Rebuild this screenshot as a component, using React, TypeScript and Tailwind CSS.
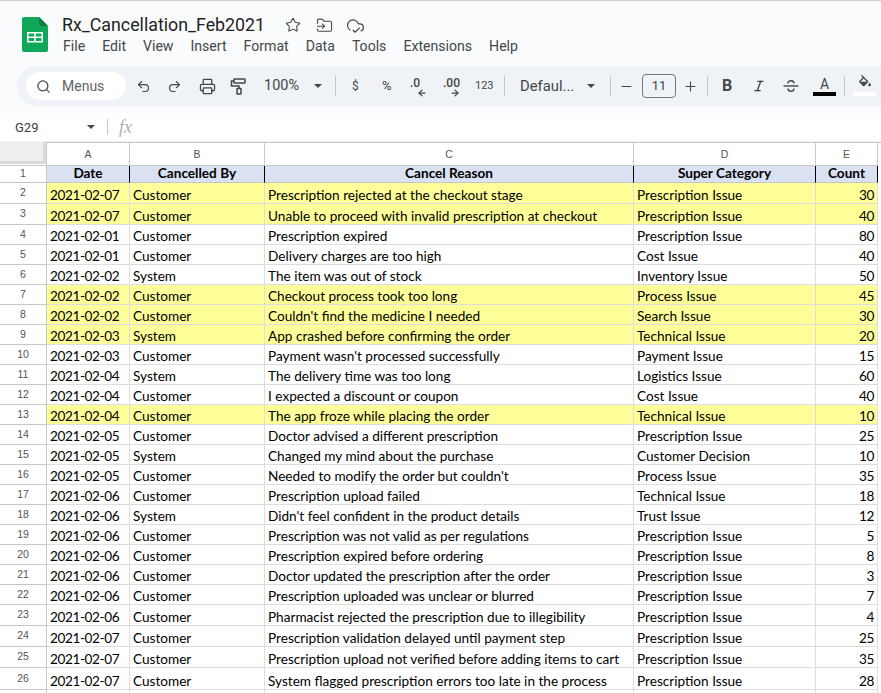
import { Star, FolderInput, CloudCheck, Undo2, Redo2, Printer, Search, Minus, Plus, Italic, ArrowLeft, ArrowRight } from "lucide-react";

const widths = ["w-[83px]", "w-[135px]", "w-[369px]", "w-[182px]", "w-[62px]"];
const rows: [string, string, string, string, number, boolean, string][] = [
  ["2021-02-07","Customer","Prescription rejected at the checkout stage","Prescription Issue",30,true,"h-[21px]"],
  ["2021-02-07","Customer","Unable to proceed with invalid prescription at checkout","Prescription Issue",40,true,"h-[21px]"],
  ["2021-02-01","Customer","Prescription expired","Prescription Issue",80,false,"h-[20px]"],
  ["2021-02-01","Customer","Delivery charges are too high","Cost Issue",40,false,"h-[20px]"],
  ["2021-02-02","System","The item was out of stock","Inventory Issue",50,false,"h-[20px]"],
  ["2021-02-02","Customer","Checkout process took too long","Process Issue",45,true,"h-[20px]"],
  ["2021-02-02","Customer","Couldn't find the medicine I needed","Search Issue",30,true,"h-[20px]"],
  ["2021-02-03","System","App crashed before confirming the order","Technical Issue",20,true,"h-[20px]"],
  ["2021-02-03","Customer","Payment wasn't processed successfully","Payment Issue",15,false,"h-[20px]"],
  ["2021-02-04","System","The delivery time was too long","Logistics Issue",60,false,"h-[20px]"],
  ["2021-02-04","Customer","I expected a discount or coupon","Cost Issue",40,false,"h-[20px]"],
  ["2021-02-04","Customer","The app froze while placing the order","Technical Issue",10,true,"h-[20px]"],
  ["2021-02-05","Customer","Doctor advised a different prescription","Prescription Issue",25,false,"h-[20px]"],
  ["2021-02-05","System","Changed my mind about the purchase","Customer Decision",10,false,"h-[20px]"],
  ["2021-02-05","Customer","Needed to modify the order but couldn't","Process Issue",35,false,"h-[20px]"],
  ["2021-02-06","Customer","Prescription upload failed","Technical Issue",18,false,"h-[20px]"],
  ["2021-02-06","System","Didn't feel confident in the product details","Trust Issue",12,false,"h-[20px]"],
  ["2021-02-06","Customer","Prescription was not valid as per regulations","Prescription Issue",5,false,"h-[20px]"],
  ["2021-02-06","Customer","Prescription expired before ordering","Prescription Issue",8,false,"h-[20px]"],
  ["2021-02-06","Customer","Doctor updated the prescription after the order","Prescription Issue",3,false,"h-[20px]"],
  ["2021-02-06","Customer","Prescription uploaded was unclear or blurred","Prescription Issue",7,false,"h-[20px]"],
  ["2021-02-06","Customer","Pharmacist rejected the prescription due to illegibility","Prescription Issue",4,false,"h-[21px]"],
  ["2021-02-07","Customer","Prescription validation delayed until payment step","Prescription Issue",25,false,"h-[21px]"],
  ["2021-02-07","Customer","Prescription upload not verified before adding items to cart","Prescription Issue",35,false,"h-[21px]"],
  ["2021-02-07","Customer","System flagged prescription errors too late in the process","Prescription Issue",28,false,"h-[22px]"],
];
const menus = ["File","Edit","View","Insert","Format","Data","Tools","Extensions","Help"];
const cols = ["A","B","C","D","E"];
const heads = ["Date","Cancelled By","Cancel Reason","Super Category","Count"];

function Caret({ className = "" }: { className?: string }) {
  return <span className={`w-0 h-0 shrink-0 border-x-[4px] border-x-transparent border-t-[4px] border-t-[#444746] ${className}`} />;
}
function Sep({ className = "" }: { className?: string }) {
  return <span className={`w-px h-[20px] shrink-0 bg-[#c7c7c7] ${className}`} />;
}

export default function App() {
  return (
    <div className="w-[881px] h-[693px] overflow-hidden bg-[#f9fbfd] flex flex-col font-['Roboto',sans-serif] text-[#444746]">
      <div className="h-px bg-[#d0d0d0]" />
      <div className="h-[65px] flex pl-[22px] pt-[13px] shrink-0">
        <svg width="26" height="35" viewBox="0 0 26 35" className="mt-[3px]">
          <path d="M2 0H17L26 9V33a2 2 0 0 1-2 2H2a2 2 0 0 1-2-2V2a2 2 0 0 1 2-2Z" fill="#0fa85b" />
          <path d="M17 0L26 9H19a2 2 0 0 1-2-2Z" fill="#0b8043" />
          <path d="M5 15H21V25.500H5Z" fill="#fff" />
          <path d="M6.500 16.500H12.200V19.500H6.500ZM13.800 16.500H19.500V19.500H13.800ZM6.500 21H12.200V24H6.500ZM13.800 21H19.500V24H13.800Z" fill="#0fa85b" />
        </svg>
        <div className="ml-[14px] flex flex-col">
          <div className="flex items-center h-[22px]">
            <span className="text-[17.8px] leading-[22px] text-[#1f1f1f] w-[223px]">Rx_Cancellation_Feb2021</span>
            <Star size={16} strokeWidth={1.6} className="text-[#444746]" />
            <FolderInput size={17} strokeWidth={1.5} className="ml-[15px] text-[#444746]" />
            <CloudCheck size={19} strokeWidth={1.5} className="ml-[13px] text-[#444746]" />
          </div>
          <div className="flex items-center gap-[17px] text-[14.1px] leading-[20px] ml-px text-[#444746]">
            {menus.map((m) => <span key={m}>{m}</span>)}
          </div>
        </div>
      </div>
      <div className="h-[40px] ml-[17px] rounded-l-[20px] bg-[#eff2f7] flex items-center shrink-0">
        <div className="ml-[9px] w-[100px] h-[28px] shrink-0 rounded-full bg-white flex items-center pl-[10px] text-[14px] text-[#5f6368]">
          <Search size={15} strokeWidth={2} className="text-[#444746]" />
          <span className="ml-[11px]">Menus</span>
        </div>
        <Undo2 size={15} strokeWidth={1.8} className="ml-[10px] shrink-0" />
        <Redo2 size={15} strokeWidth={1.8} className="ml-[16px] shrink-0" />
        <Printer size={17} strokeWidth={1.8} className="ml-[17px] shrink-0" />
        <svg width="16" height="17" viewBox="0 0 16 17" fill="none" stroke="currentColor" strokeWidth="1.500" className="ml-[14px] shrink-0">
          <rect x="4" y="1" width="11" height="4" rx="0.500" />
          <path d="M4 3H1.500V8H9V10.500" />
          <rect x="7" y="10.500" width="4" height="5.500" rx="0.500" />
        </svg>
        <span className="ml-[18px] w-[36px] text-[14.5px] whitespace-nowrap">100%</span>
        <Caret className="ml-[14px]" />
        <Sep className="ml-[13px]" />
        <span className="ml-[16px] w-[7px] text-[12px]">$</span>
        <span className="ml-[23px] w-[11px] text-[13px]">%</span>
        <span className="ml-[17px] relative w-[16px] text-[12px] font-medium leading-none -mt-[6px]">.0<ArrowLeft size={10} strokeWidth={3} className="absolute left-[7px] top-[11px]" /></span>
        <span className="ml-[17px] relative w-[20px] text-[12px] font-medium leading-none -mt-[6px]">.00<ArrowRight size={10} strokeWidth={3} className="absolute left-[7px] top-[11px]" /></span>
        <span className="ml-[12px] w-[18px] text-[11px]">123</span>
        <Sep className="ml-[11px]" />
        <span className="ml-[15px] w-[60px] text-[14.8px] whitespace-nowrap">Defaul...</span>
        <Caret className="ml-[7px]" />
        <Sep className="ml-[15px]" />
        <Minus size={15} strokeWidth={1.8} className="ml-[8px] shrink-0" />
        <span className="ml-[8px] w-[34px] h-[24px] shrink-0 border border-[#747775] rounded-[4px] flex items-center justify-center text-[13px]">11</span>
        <Plus size={15} strokeWidth={1.8} className="ml-[7px] shrink-0" />
        <Sep className="ml-[9px]" />
        <span className="ml-[12px] w-[14px] flex justify-center font-bold text-[16px]">B</span>
        <Italic size={14} strokeWidth={2.4} className="ml-[18px] shrink-0" />
        <svg width="16" height="16" viewBox="0 0 16 16" fill="none" stroke="currentColor" strokeWidth="1.400" className="ml-[17px] shrink-0">
          <path d="M0.500 8H15.500" />
          <path d="M5 5.500C5 3.500 6.500 2.800 8 2.800C9.500 2.800 11 3.500 11 5.500" />
          <path d="M5 10.500C5 12.500 6.500 13.200 8 13.200C9.500 13.200 11 12.500 11 10.500" />
        </svg>
        <span className="ml-[14px] w-[23px] shrink-0 h-[20px] flex flex-col items-center text-[14px] leading-[16px]">A<span className="w-[23px] h-[4px] bg-black" /></span>
        <Sep className="ml-[8px]" />
        <span className="ml-[8px] w-[23px] shrink-0 h-[20px] flex flex-col items-center">
          <svg width="16" height="16" viewBox="0 0 24 24" fill="currentColor" className="-mt-[1px]">
            <path d="M16.560 8.940L7.620 0 6.210 1.410l2.380 2.380-5.150 5.150c-.59.59-.59 1.540 0 2.120l5.500 5.500c.29.29.68.44 1.060.44s.77-.15 1.060-.44l5.500-5.500c.59-.58.59-1.530 0-2.120zM5.210 10L10 5.210 14.790 10H5.210zM19 11.500s-2 2.170-2 3.500c0 1.100.9 2 2 2s2-.9 2-2c0-1.330-2-3.500-2-3.500z" />
          </svg>
          <span className="w-[23px] h-[4px] bg-white mt-[1px]" />
        </span>
      </div>
      <div className="h-[7px] shrink-0" />
      <div className="h-[29px] bg-white flex items-center shrink-0 border-b border-[#f1f1f1]">
        <span className="ml-[15px] w-[72px] text-[13px] text-[#3c4043] mt-[1px]">G29</span>
        <Caret />
        <span className="ml-[12px] w-px h-[16px] bg-[#c7c7c7]" />
        <span className="ml-[11px] font-['Liberation_Serif',serif] italic text-[18px] leading-none text-[#b0b0b0]">fx</span>
      </div>
      <div className="flex-1 bg-white flex flex-col overflow-hidden font-['Lato',sans-serif] text-[13.6px] text-black">
        <div className="flex h-[24px] shrink-0 border-t border-[#c7c7c7] font-['Liberation_Sans',sans-serif] text-[10.5px] text-[#555]">
          <div className="w-[47px] border-r border-b border-[#c7c7c7] bg-white">
            <div className="h-[19px] w-[43px] bg-[#eeeeee] border-r-[3px] border-b-[3px] border-[#dadada] box-content -mt-px" />
          </div>
          {cols.map((c, i) => (
            <div key={c} className={`${widths[i]} pt-px border-r border-b border-[#c7c7c7] flex items-center justify-center`}>{c}</div>
          ))}
        </div>
        <div className="flex h-[17px] shrink-0">
          <div className="w-[47px] border-r border-b border-[#c7c7c7] flex items-center justify-center font-['Liberation_Sans',sans-serif] text-[10.5px] text-[#555]">1</div>
          {heads.map((h, i) => (
            <div key={h} className={`${widths[i]} bg-[#d9e1f2] border-r border-black border-b-[#c7c7c7] border-b flex items-center justify-center font-bold leading-none`}>{h}</div>
          ))}
        </div>
        {rows.map((r, i) => (
          <div key={i} className={`flex shrink-0 ${r[6]}`}>
            <div className="w-[47px] border-r border-b border-[#c7c7c7] flex items-center justify-center font-['Liberation_Sans',sans-serif] text-[10.5px] text-[#555]">{i + 2}</div>
            {[r[0], r[1], r[2], r[3], r[4]].map((v, j) => (
              <div key={j} className={`${widths[j]} border-r border-b border-[#dedede] flex items-end px-[3px] whitespace-nowrap overflow-hidden leading-[15px] ${r[5] ? "bg-[#ffff99]" : "bg-white"} ${j === 4 ? "justify-end" : ""} ${j === 0 || j === 4 ? "tracking-[-0.4px]" : ""}`}>{v}</div>
            ))}
          </div>
        ))}
        <div className="flex h-[10px] shrink-0">
          <div className="w-[47px] border-r border-[#c7c7c7]" />
          {widths.map((w) => <div key={w} className={`${w} border-r border-[#dedede]`} />)}
        </div>
      </div>
    </div>
  );
}
